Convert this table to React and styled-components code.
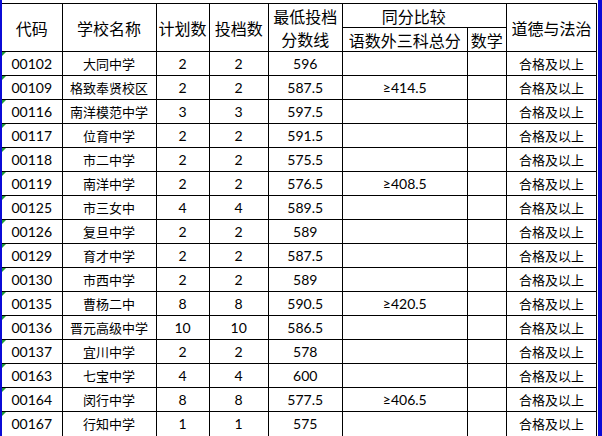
import React from "react";
import styled, { createGlobalStyle } from "styled-components";

const GlobalStyle = createGlobalStyle`
  html, body {
    margin: 0;
    padding: 0;
    background: #ffffff;
  }
  body {
    font-family: Lato, "Noto Sans CJK SC", sans-serif;
    color: #000;
  }
`;

const rows = [
  ["00102", "大同中学", 2, 2, "596", ""],
  ["00109", "格致奉贤校区", 2, 2, "587.5", "≥414.5"],
  ["00116", "南洋模范中学", 3, 3, "597.5", ""],
  ["00117", "位育中学", 2, 2, "591.5", ""],
  ["00118", "市二中学", 2, 2, "575.5", ""],
  ["00119", "南洋中学", 2, 2, "576.5", "≥408.5"],
  ["00125", "市三女中", 4, 4, "589.5", ""],
  ["00126", "复旦中学", 2, 2, "589", ""],
  ["00129", "育才中学", 2, 2, "587.5", ""],
  ["00130", "市西中学", 2, 2, "589", ""],
  ["00135", "曹杨二中", 8, 8, "590.5", "≥420.5"],
  ["00136", "晋元高级中学", 10, 10, "586.5", ""],
  ["00137", "宜川中学", 2, 2, "578", ""],
  ["00163", "七宝中学", 4, 4, "600", ""],
  ["00164", "闵行中学", 8, 8, "577.5", "≥406.5"],
  ["00167", "行知中学", 1, 1, "575", ""],
];

const colWidths = [60, 94, 53, 59, 74, 125, 39, 90];

function App() {
  return (
    <Sheet>
      <GlobalStyle />
      <Grid>
        <colgroup>
          {colWidths.map((w, i) => (
            <col key={i} style={{ width: w }} />
          ))}
        </colgroup>
        <thead>
          <tr>
            <Th rowSpan={2}>代码</Th>
            <Th rowSpan={2}>学校名称</Th>
            <Th rowSpan={2}>计划数</Th>
            <Th rowSpan={2}>投档数</Th>
            <Th rowSpan={2}>
              <TwoLine>最低投档</TwoLine>
              <TwoLine>分数线</TwoLine>
            </Th>
            <Th colSpan={2} $shift>
              同分比较
            </Th>
            <Th rowSpan={2}>道德与法治</Th>
          </tr>
          <tr>
            <Th>语数外三科总分</Th>
            <Th>数学</Th>
          </tr>
        </thead>
        <tbody>
          {rows.map((r) => (
            <tr key={r[0]}>
              <CodeCell>{r[0]}</CodeCell>
              <NameCell>{r[1]}</NameCell>
              <Td>{r[2]}</Td>
              <Td>{r[3]}</Td>
              <Td>{r[4]}</Td>
              <Td>{r[5]}</Td>
              <Td />
              <NameCell>合格及以上</NameCell>
            </tr>
          ))}
        </tbody>
      </Grid>
    </Sheet>
  );
}

const Sheet = styled.div`
  width: 602px;
  height: 436px;
  box-sizing: border-box;
  padding-top: 3px;
  padding-right: 1px;
  border-left: 2px solid #0b0bd6;
  border-right: 4px solid #0b0bd6;
  overflow: hidden;
`;

const Grid = styled.table`
  width: 595px;
  table-layout: fixed;
  border-collapse: collapse;
  border-style: hidden;
  border-top: 1px solid #000;
  border-right: 1px solid #000;

  tr {
    height: 24px;
  }
`;

const Th = styled.th`
  border: 1px solid #000;
  padding: 0;
  padding-right: ${(p) => (p.$shift ? "21px" : "0")};
  font-weight: normal;
  font-size: 16px;
  line-height: 22px;
  font-family: "Noto Sans CJK SC", sans-serif;
  text-align: center;
  vertical-align: middle;
  white-space: nowrap;
  overflow: hidden;
`;

const TwoLine = styled.div`
  height: 23px;
  line-height: 23px;
  overflow: hidden;
`;

const Td = styled.td`
  border: 1px solid #000;
  padding: 0;
  height: 23px;
  font-size: 14px;
  line-height: 18px;
  text-align: center;
  vertical-align: middle;
  white-space: nowrap;
  overflow: hidden;
`;

const NameCell = styled(Td)`
  font-size: 13px;
`;

const CodeCell = styled(Td)`
  position: relative;
  overflow: visible;

  &::before {
    content: "";
    position: absolute;
    left: 0;
    top: 0;
    width: 0;
    height: 0;
    border-top: 4px solid #1f9b3a;
    border-right: 4px solid transparent;
  }
`;

export default App;
